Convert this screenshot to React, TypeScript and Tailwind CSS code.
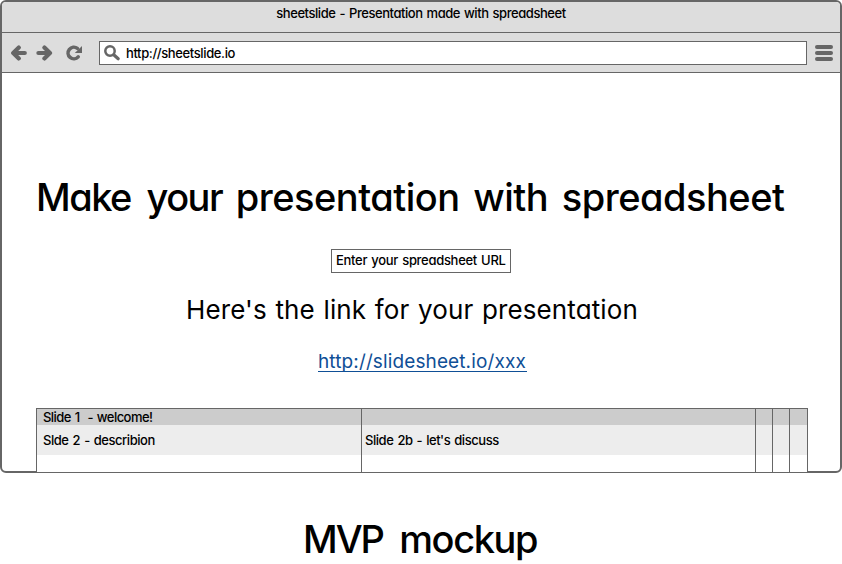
import React from "react";

function BackIcon() {
  return (
    <svg width="17" height="16" viewBox="0 0 17 16" fill="none" stroke="#666" strokeWidth="4.2" strokeLinecap="round" strokeLinejoin="round">
      <path d="M8.8 2.6 L3.2 8 L8.8 13.4 M3.8 8 H14.8" />
    </svg>
  );
}

function ForwardIcon() {
  return (
    <svg width="17" height="16" viewBox="0 0 17 16" fill="none" stroke="#666" strokeWidth="4.2" strokeLinecap="round" strokeLinejoin="round">
      <path d="M8.4 2.6 L14 8 L8.4 13.4 M13.4 8 H2.4" />
    </svg>
  );
}

function ReloadIcon() {
  return (
    <svg width="17" height="16" viewBox="0 0 17 16">
      <path d="M11.4 3.4 A5.8 5.8 0 1 0 12.2 11.9" fill="none" stroke="#666" strokeWidth="3.6" strokeLinecap="round" />
      <path d="M16 0.9 V8 H8.8 Z" fill="#666" />
    </svg>
  );
}

function SearchIcon() {
  return (
    <svg width="17" height="16" viewBox="0 0 17 16" fill="none" stroke="#666" strokeLinecap="round">
      <circle cx="6" cy="6" r="4.7" strokeWidth="2.5" />
      <path d="M10 10 L14.2 13.7" strokeWidth="3.2" />
    </svg>
  );
}

function MenuIcon() {
  return (
    <div className="flex h-[16px] w-[18px] flex-col justify-between">
      <div className="h-[4px] rounded-[2px] bg-[#666]" />
      <div className="h-[4px] rounded-[2px] bg-[#666]" />
      <div className="h-[4px] rounded-[2px] bg-[#666]" />
    </div>
  );
}

const columns = [
  { width: "w-[324px]", pad: "pl-[6px]", cells: ["Slide 1\u00a0 - welcome!", "Slde 2 - describion"] },
  { width: "w-[393px]", pad: "pl-[3px]", cells: ["", "Slide 2b - let's discuss"] },
  { width: "w-[16px]", pad: "", cells: ["", ""] },
  { width: "w-[16px]", pad: "", cells: ["", ""] },
  { width: "w-[17px]", pad: "", cells: ["", ""] },
];

export default function App() {
  return (
    <div className="h-[564px] w-[842px] overflow-hidden bg-white font-['Inter',sans-serif] text-[13px] font-medium tracking-[-0.45px] text-black [font-feature-settings:'cv11','calt'_0] [word-spacing:1px]">
      <div className="h-[473px] rounded-[6px] border-2 border-[#666] bg-white">
        <div className="flex h-[31px] justify-center rounded-t-[4px] border-b border-[#666] bg-[#ddd] pt-px leading-[20px]">
          <span className="whitespace-nowrap">sheetslide - Presentation made with spreadsheet</span>
        </div>
        <div className="flex h-[40px] items-center border-b border-[#666] bg-[#ddd] pl-[8px]">
          <BackIcon />
          <div className="ml-[9px]"><ForwardIcon /></div>
          <div className="ml-[13px]"><ReloadIcon /></div>
          <div className="ml-[16px] flex h-[24px] w-[708px] items-center border border-[#666] bg-white pl-[4px]">
            <SearchIcon />
            <span className="ml-[5px] pt-[2px] tracking-[-0.38px]">http://sheetslide.io</span>
          </div>
          <div className="ml-[7.5px]"><MenuIcon /></div>
        </div>

        <h1 className="mt-[100px] ml-[34px] h-[48px] text-[38px] leading-[48px] tracking-[-0.5px] whitespace-nowrap [word-spacing:4px]">
          <span className="tracking-[-1.5px] [word-spacing:7px]">Make your</span> presentation with spreadsheet
        </h1>
        <div className="mt-[28px] ml-[329px] flex h-[24px] w-[180px] items-center border border-[#666] pl-[4px] tracking-[-0.3px] whitespace-nowrap">
          Enter your spreadsheet URL
        </div>
        <h2 className="mt-[21px] ml-[184px] h-[32px] text-[26px] leading-[32px] font-normal tracking-[0.1px] whitespace-nowrap [word-spacing:1.3px]">
          Here's the link for your presentation
        </h2>
        <div className="mt-[24px] ml-[316px] h-[22px] w-[209px] border-b border-[#0f4f96] text-[19px] leading-[24px] font-normal tracking-[0.12px] whitespace-nowrap text-[#0f4f96]">
          http://slidesheet.io/xxx
        </div>

        <div className="mt-[36px] ml-[34px] flex h-[65px] w-[772px] border border-[#666] bg-white">
          {columns.map((column, i) => (
            <div key={i} className={i < columns.length - 1 ? "border-r border-[#666]" : ""}>
              <div className={`${column.width} ${column.pad} h-[16px] bg-[#ccc] leading-[16px] tracking-[-0.55px] whitespace-nowrap`}>{column.cells[0]}</div>
              <div className={`${column.width} ${column.pad} h-[30px] bg-[#ededed] leading-[31px] tracking-[-0.45px] whitespace-nowrap`}>{column.cells[1]}</div>
            </div>
          ))}
        </div>
      </div>

      <div className="mt-[42px] ml-[303px] h-[48px] text-[38px] leading-[48px] tracking-[-1.4px] whitespace-nowrap [word-spacing:7.5px]">
        <span className="tracking-[-2px]">MVP</span> mockup
      </div>
    </div>
  );
}
